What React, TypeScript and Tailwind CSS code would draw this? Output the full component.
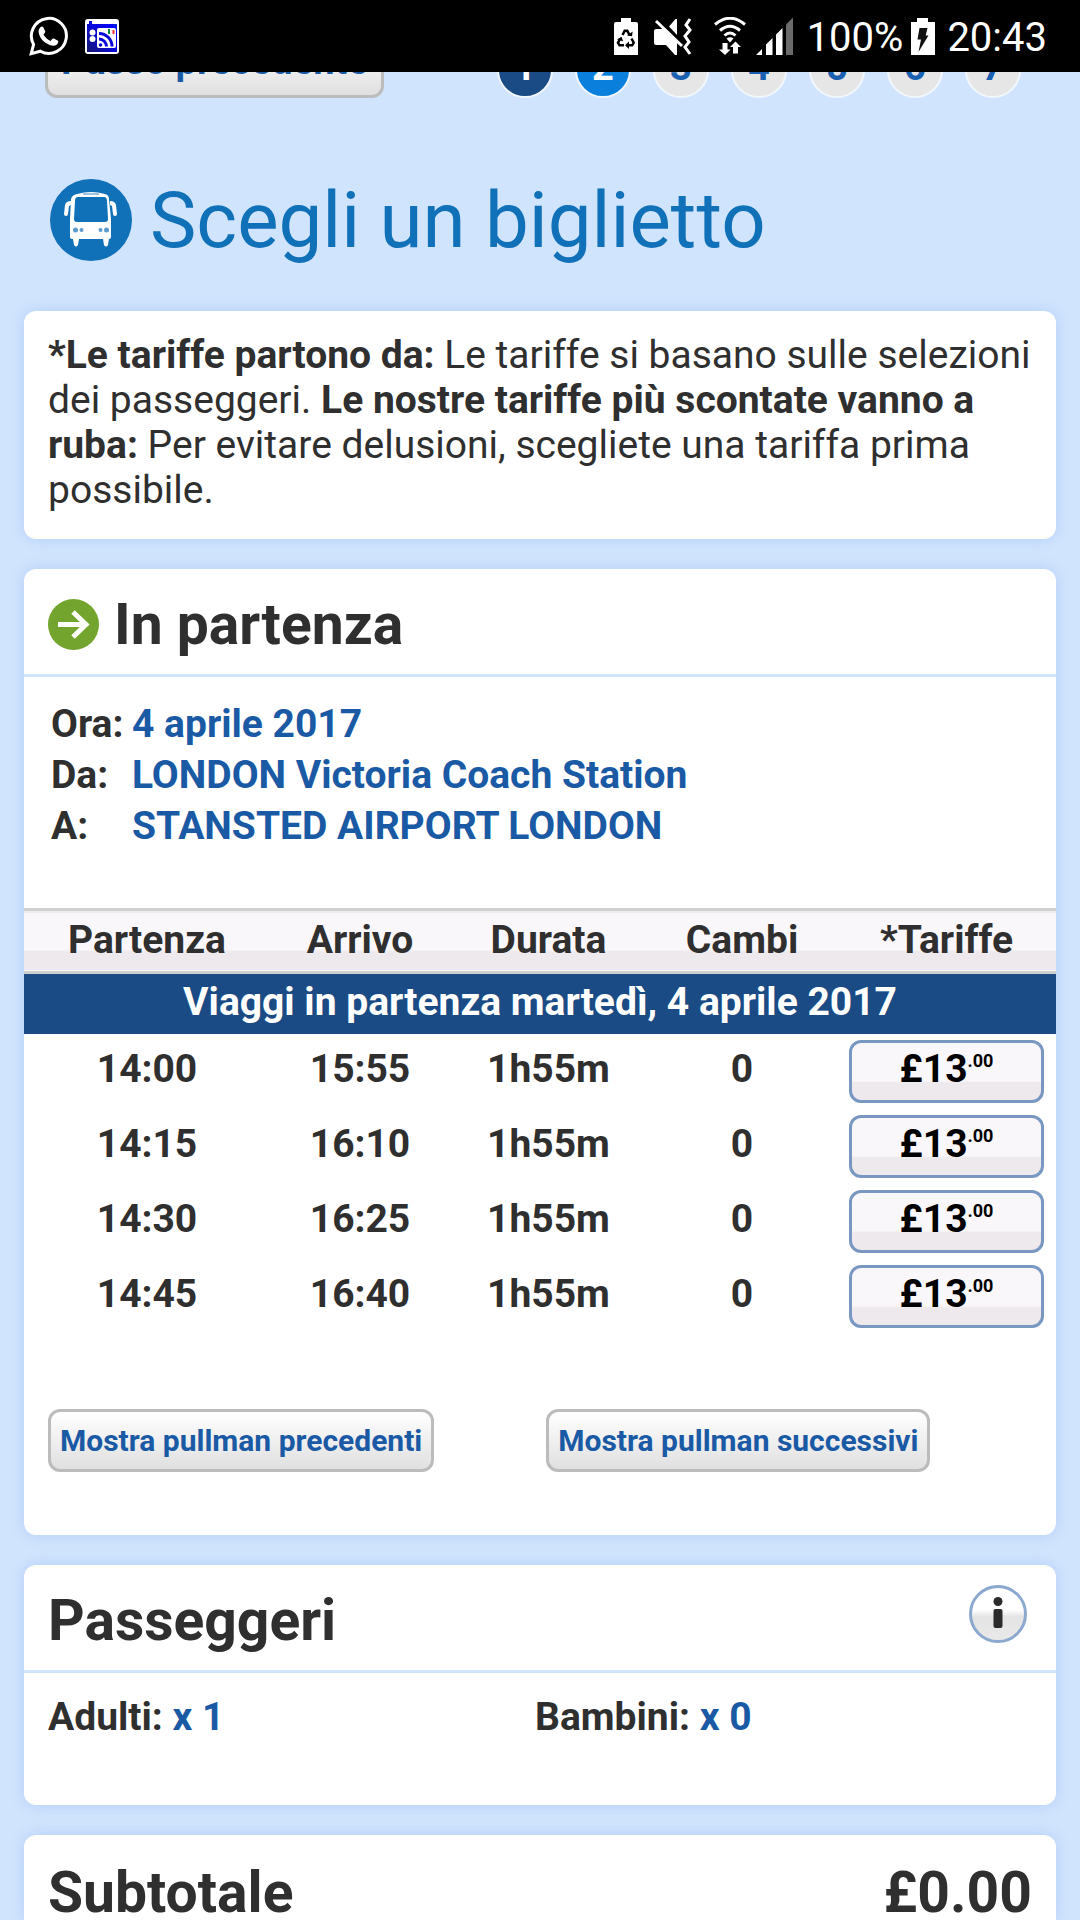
import { useState } from "react";
import type { ReactNode } from "react";

type Journey = {
  departs: string;
  arrives: string;
  duration: string;
  changes: number;
  pounds: string;
  pence: string;
};

const JOURNEYS: Journey[] = [
  { departs: "14:00", arrives: "15:55", duration: "1h55m", changes: 0, pounds: "£13", pence: ".00" },
  { departs: "14:15", arrives: "16:10", duration: "1h55m", changes: 0, pounds: "£13", pence: ".00" },
  { departs: "14:30", arrives: "16:25", duration: "1h55m", changes: 0, pounds: "£13", pence: ".00" },
  { departs: "14:45", arrives: "16:40", duration: "1h55m", changes: 0, pounds: "£13", pence: ".00" },
];

const STEPS = [1, 2, 3, 4, 5, 6, 7];

const DETAILS = [
  { label: "Ora:", value: "4 aprile 2017" },
  { label: "Da:", value: "LONDON Victoria Coach Station" },
  { label: "A:", value: "STANSTED AIRPORT LONDON" },
];

function WhatsAppIcon() {
  return (
    <svg viewBox="0 0 40 40" className="size-10" fill="none" aria-hidden="true">
      <path
        d="M2.200 37.600 4.600 28.400A17.500 17.500 0 1 1 11.400 35.200Z"
        stroke="#fff"
        strokeWidth="3"
        strokeLinejoin="miter"
      />
      <path
        d="M11.400 11.200c1-1 2.400-1 3 .2l1.700 3.700c.3.800.1 1.400-.4 2l-1.200 1.500c1.600 3 3.800 5 7 6.400l1.700-2c.5-.6 1-.7 1.700-.4l3.600 1.800c.8.400.9.900.7 1.800-.5 2.300-2.900 3.700-5 3.600-7.600-.8-14-7.400-14.600-13.700-.1-2 .6-3.700 1.800-4.900Z"
        fill="#fff"
      />
    </svg>
  );
}

function RadioIcon() {
  return (
    <svg viewBox="0 0 34 35" className="h-[35px] w-[34px]" fill="none" aria-hidden="true">
      <defs>
        <linearGradient id="radio" x1="0" y1="1" x2="1" y2="0">
          <stop offset="0" stopColor="#161670" />
          <stop offset=".5" stopColor="#0808d8" />
          <stop offset=".85" stopColor="#0000f8" />
          <stop offset="1" stopColor="#0058b8" />
        </linearGradient>
      </defs>
      <rect width="34" height="35" rx="3" fill="#fff" />
      <path d="M2 5h2V2h3v3h25v28H2Z" fill="url(#radio)" />
      <rect x="12" y="9" width="19" height="20" rx="2" fill="#fff" />
      <circle cx="7.500" cy="13.500" r="3" fill="#fff" />
      <circle cx="7.500" cy="20" r="3" fill="#fff" />
      <path d="M14 14.500a13 13 0 0 1 13 13M14 20a7.500 7.500 0 0 1 7.500 7.500" stroke="#0808d8" strokeWidth="3" />
      <circle cx="15.500" cy="26" r="1.800" fill="#0808d8" />
      <path d="M24 10v5" stroke="#0a8a3a" strokeWidth="2" />
      <path d="M28.500 11v4" stroke="#f03030" strokeWidth="2" />
    </svg>
  );
}

function BatteryRecycleIcon() {
  return (
    <svg viewBox="0 0 24 37" className="h-[37px] w-6" fill="none" aria-hidden="true">
      <path d="M7 0h10v4h5a2 2 0 0 1 2 2v31H0V6a2 2 0 0 1 2-2h5Z" fill="#fff" />
      <path d="m8.500 17 2.200-4.200h2.600l2.200 4.200M17.500 20.500l2.200 4.300-1.500 2.500h-4.700M10 27.300H5.500L4 24.800l2.300-4.300" stroke="#000" strokeWidth="2.500" />
      <path d="m13 17.500 5 .8.700-4.800ZM15 23.500v7.500l-4-3.700ZM3 21.500l4.500-2.800 1.700 4.600Z" fill="#000" />
    </svg>
  );
}

function MuteVibrateIcon() {
  return (
    <svg viewBox="0 0 38 37" className="h-[37px] w-[38px]" fill="none" aria-hidden="true">
      <path d="M0 13q0-2 2-2h10L23 22v15h-2l-9-10H2q-2 0-2-2ZM15 8.500 21.500 1H23v16Z" fill="#fff" />
      <path d="m4 1 25 24.500" stroke="#000" strokeWidth="3" />
      <path d="m2 3 26 25" stroke="#fff" strokeWidth="3" />
      <path d="m36 1-4 6 4 5-5 6 4 6-4 5 5 7" stroke="#fff" strokeWidth="3" />
    </svg>
  );
}

function WifiIcon() {
  return (
    <svg viewBox="0 0 32 38" className="h-[38px] w-8" fill="none" aria-hidden="true">
      <path d="M1 7.500Q16-5 31 7.500M6 13.500q10-8.500 20 0M10.500 18.500q5.500-5 11 0" stroke="#fff" strokeWidth="3" />
      <path d="M12.500 21.500q3.500-2.500 7 0L16 25.500Z" fill="#fff" />
      <path d="M8.500 26h5v6.500h3L11 38l-6-5.500h3.500ZM19 36.500V30h-3l5.500-5.500L27 30h-3v6.500Z" fill="#fff" />
    </svg>
  );
}

function SignalIcon() {
  return (
    <svg viewBox="0 0 37 38" className="h-[38px] w-[37px]" aria-hidden="true">
      <path d="m0 38 6-6v6ZM10 38V27.500L16.500 21v17ZM20 38V17.500L26.500 11v27Z" fill="#fff" />
      <path d="M30 38V7.500L37 .500V38Z" fill="#6b6b6b" />
    </svg>
  );
}

function BatteryChargeIcon() {
  return (
    <svg viewBox="0 0 24 37" className="h-[37px] w-6" aria-hidden="true">
      <path d="M6 0h11v4h7v33H0V4h6Z" fill="#fff" />
      <path d="M8.500 10h8l-1.800 7.500h2.800L7.500 34l2.500-12.500H6.500Z" fill="#111" />
    </svg>
  );
}

function BusIcon() {
  return (
    <svg viewBox="0 0 82 82" className="size-[82px] shrink-0" aria-hidden="true">
      <circle cx="41" cy="41" r="41" fill="#1070b8" />
      <path d="M27 15q14-4 28 0 4 1 4 5l2 20v18q0 2-2 2l-1 6q-2 3-4 0l-1-6H29l-1 6q-2 3-4 0l-1-6q-3 0-3-2V40l1-20q1-4 6-5Z" fill="#fff" />
      <path d="M28 18h26q3 0 3 4l1 18q0 3-3 3H27q-3 0-3-3l1-18q0-4 3-4Z" fill="#1070b8" />
      <path d="M33 15h16" stroke="#7fb2da" strokeWidth="1.500" />
      <path d="M21 22q-5 0-6 4l-1 9q0 2 2 2t2-2l1-8 2-1ZM60 22q5 0 6 4l1 9q0 2-2 2t-2-2l-1-8-2-1Z" fill="#fff" />
      <g fill="#5b9bcd">
        <circle cx="25.500" cy="51" r="2.500" />
        <circle cx="31.500" cy="51" r="2" />
        <circle cx="50.500" cy="51" r="2" />
        <circle cx="56.500" cy="51" r="2.500" />
      </g>
    </svg>
  );
}

function ArrowIcon() {
  return (
    <svg viewBox="0 0 51 51" className="size-[51px] shrink-0" fill="none" aria-hidden="true">
      <circle cx="25.500" cy="25.500" r="25.500" fill="#73a42d" />
      <path d="M10 25.500h28M25 13l13 12.500L25 38" stroke="#fff" strokeWidth="5" />
    </svg>
  );
}

function InfoIcon() {
  return (
    <svg viewBox="0 0 58 58" className="size-[58px]" aria-hidden="true">
      <defs>
        <linearGradient id="info" x1="0" y1="0" x2="0" y2="1">
          <stop offset=".42" stopColor="#fff" />
          <stop offset=".55" stopColor="#e4e4e4" />
          <stop offset="1" stopColor="#e9e9e9" />
        </linearGradient>
      </defs>
      <circle cx="29" cy="29" r="27.500" fill="url(#info)" stroke="#8ba8cf" strokeWidth="3" />
      <circle cx="29" cy="16.500" r="4.500" fill="#2b2b2b" />
      <rect x="24.500" y="24" width="9" height="19" rx="2" fill="#2b2b2b" />
    </svg>
  );
}

function StatusBar() {
  return (
    <header className="flex h-[72px] items-center justify-between bg-black pr-[33px] pl-[29px] text-[40px] leading-none text-white">
      <div className="flex items-center gap-4">
        <WhatsAppIcon />
        <RadioIcon />
      </div>
      <div className="flex items-center">
        <div className="flex items-center">
          <span className="mr-4"><BatteryRecycleIcon /></span>
          <span className="mr-[22px]"><MuteVibrateIcon /></span>
          <span className="mr-2.5"><WifiIcon /></span>
          <span className="mr-3.5"><SignalIcon /></span>
        </div>
        <span className="mr-2 pt-1">100%</span>
        <span className="mr-3"><BatteryChargeIcon /></span>
        <span className="pt-1">20:43</span>
      </div>
    </header>
  );
}

function GreyButton({ children, className }: { children: ReactNode; className: string }) {
  return (
    <button
      type="button"
      className={`h-[63px] shrink-0 rounded-xl border-[3px] border-[#bcbcbc] bg-linear-to-b from-white to-[#e0e0e0] leading-none font-bold whitespace-nowrap text-[#1a5aa5] ${className}`}
    >
      {children}
    </button>
  );
}

function Card({ children, className = "rounded-xl" }: { children: ReactNode; className?: string }) {
  return <section className={`bg-white shadow-[0_0_15px_#b2cef8] ${className}`}>{children}</section>;
}

function CardHeader({ children }: { children: ReactNode }) {
  return (
    <div className="flex h-[108px] items-center gap-[15px] border-b-[3px] border-[#d1e4fd] px-6 pt-1.5">{children}</div>
  );
}

function JourneyTable() {
  const [selected, setSelected] = useState<string | null>(null);

  return (
    <table className="w-full table-fixed text-center">
      <colgroup>
        <col className="w-[246px]" />
        <col className="w-[180px]" />
        <col className="w-[197px]" />
        <col className="w-[190px]" />
        <col />
      </colgroup>
      <thead>
        <tr className="h-[63px] border-y-[3px] border-[#d0d0d0] bg-linear-to-b from-[#faf7fa] from-64% to-[#ede9ec] to-68%">
          <th scope="col" className="pb-0.5">Partenza</th>
          <th scope="col" className="pb-0.5">Arrivo</th>
          <th scope="col" className="pb-0.5">Durata</th>
          <th scope="col" className="pb-0.5">Cambi</th>
          <th scope="col" className="pb-0.5">*Tariffe</th>
        </tr>
        <tr className="h-[61px] bg-[#1a4b84] text-white">
          <th colSpan={5} scope="colgroup" className="pb-0.5">Viaggi in partenza martedì, 4 aprile 2017</th>
        </tr>
      </thead>
      <tbody>
        {JOURNEYS.map((j) => (
          <tr key={j.departs} className="h-[75px] font-bold">
            <td className="pb-1">{j.departs}</td>
            <td className="pb-1">{j.arrives}</td>
            <td className="pb-1">{j.duration}</td>
            <td className="pb-1">{j.changes}</td>
            <td className="px-3 py-1.5">
              <button
                type="button"
                aria-pressed={selected === j.departs}
                onClick={() => setSelected(j.departs)}
                className="flex h-[63px] w-full items-start justify-center rounded-xl border-[3px] border-[#7898c2] bg-linear-to-b from-[#faf7fa] from-66% to-[#ede9ec] to-70% pt-1 text-black"
              >
                {j.pounds}
                <span className="text-[18px] leading-7">{j.pence}</span>
              </button>
            </td>
          </tr>
        ))}
      </tbody>
    </table>
  );
}

export default function App() {
  return (
    <div className="flex min-h-screen flex-col bg-[#d1e4fd] font-['Roboto',sans-serif] text-[39px] leading-[45px] text-[#2f2f2f]">
      <StatusBar />

      {/* scrolled half out of view under the status bar */}
      <div className="flex h-[26px] items-end justify-between overflow-hidden pr-[59px] pl-[45px]">
        <GreyButton className="px-[13px] pb-3 text-[38px]">Passo precedente</GreyButton>
        <nav className="flex shrink-0 gap-[22px]">
          {STEPS.map((n) => (
            <a
              key={n}
              href={`#step-${n}`}
              className={`flex size-14 items-center justify-center rounded-full border-2 border-[#f2f7fd] pb-1.5 text-[38px] leading-none font-bold ${
                n === 1 ? "bg-[#1a4b84] text-white" : n === 2 ? "bg-[#0a80dc] text-white" : "bg-[#e6e6e6] text-[#1a60b0]"
              }`}
            >
              {n}
            </a>
          ))}
        </nav>
      </div>

      <main className="flex grow flex-col gap-[30px] px-6">
        <div className="-mb-[30px] flex items-center gap-[18px] pt-[81px] pb-[50px] pl-[26px]">
          <BusIcon />
          <h1 className="pt-0.5 text-[78px] leading-[80px] text-[#1070b8]">Scegli un biglietto</h1>
        </div>

        <Card>
          <p className="px-6 pt-[22px] pb-[26px]">
            <b>*Le tariffe partono da:</b> Le tariffe si basano sulle selezioni dei passeggeri.{" "}
            <b>Le nostre tariffe più scontate vanno a ruba:</b> Per evitare delusioni, scegliete una tariffa prima
            possibile.
          </p>
        </Card>

        <Card>
          <CardHeader>
            <ArrowIcon />
            <h2 className="text-[57px] leading-none font-bold">In partenza</h2>
          </CardHeader>
          <dl className="grid grid-cols-[81px_1fr] px-[27px] pt-[22px] pb-14 leading-[51px] font-bold">
            {DETAILS.map((d) => (
              <div key={d.label} className="contents">
                <dt>{d.label}</dt>
                <dd className="text-[#1a5aa5]">{d.value}</dd>
              </div>
            ))}
          </dl>
          <JourneyTable />
          <div className="flex gap-28 px-6 pt-[75px] pb-[63px]">
            <GreyButton className="px-[9px] pt-0.5 text-[30px]">Mostra pullman precedenti</GreyButton>
            <GreyButton className="px-[9px] pt-0.5 text-[30px]">Mostra pullman successivi</GreyButton>
          </div>
        </Card>

        <Card>
          <CardHeader>
            <h2 className="grow text-[57px] leading-none font-bold">Passeggeri</h2>
            <button type="button" aria-label="Informazioni sui passeggeri" className="mr-[5px] mb-3">
              <InfoIcon />
            </button>
          </CardHeader>
          <div className="flex px-6 pt-[22px] pb-[65px] font-bold">
            <p className="w-[487px]">
              Adulti: <span className="text-[#1a5aa5]">x 1</span>
            </p>
            <p>
              Bambini: <span className="text-[#1a5aa5]">x 0</span>
            </p>
          </div>
        </Card>

        <Card className="grow rounded-t-xl">
          <div className="flex justify-between px-6 pt-[30px] text-[57px] leading-[55px] font-bold">
            <h2>Subtotale</h2>
            <p>£0.00</p>
          </div>
        </Card>
      </main>
    </div>
  );
}
